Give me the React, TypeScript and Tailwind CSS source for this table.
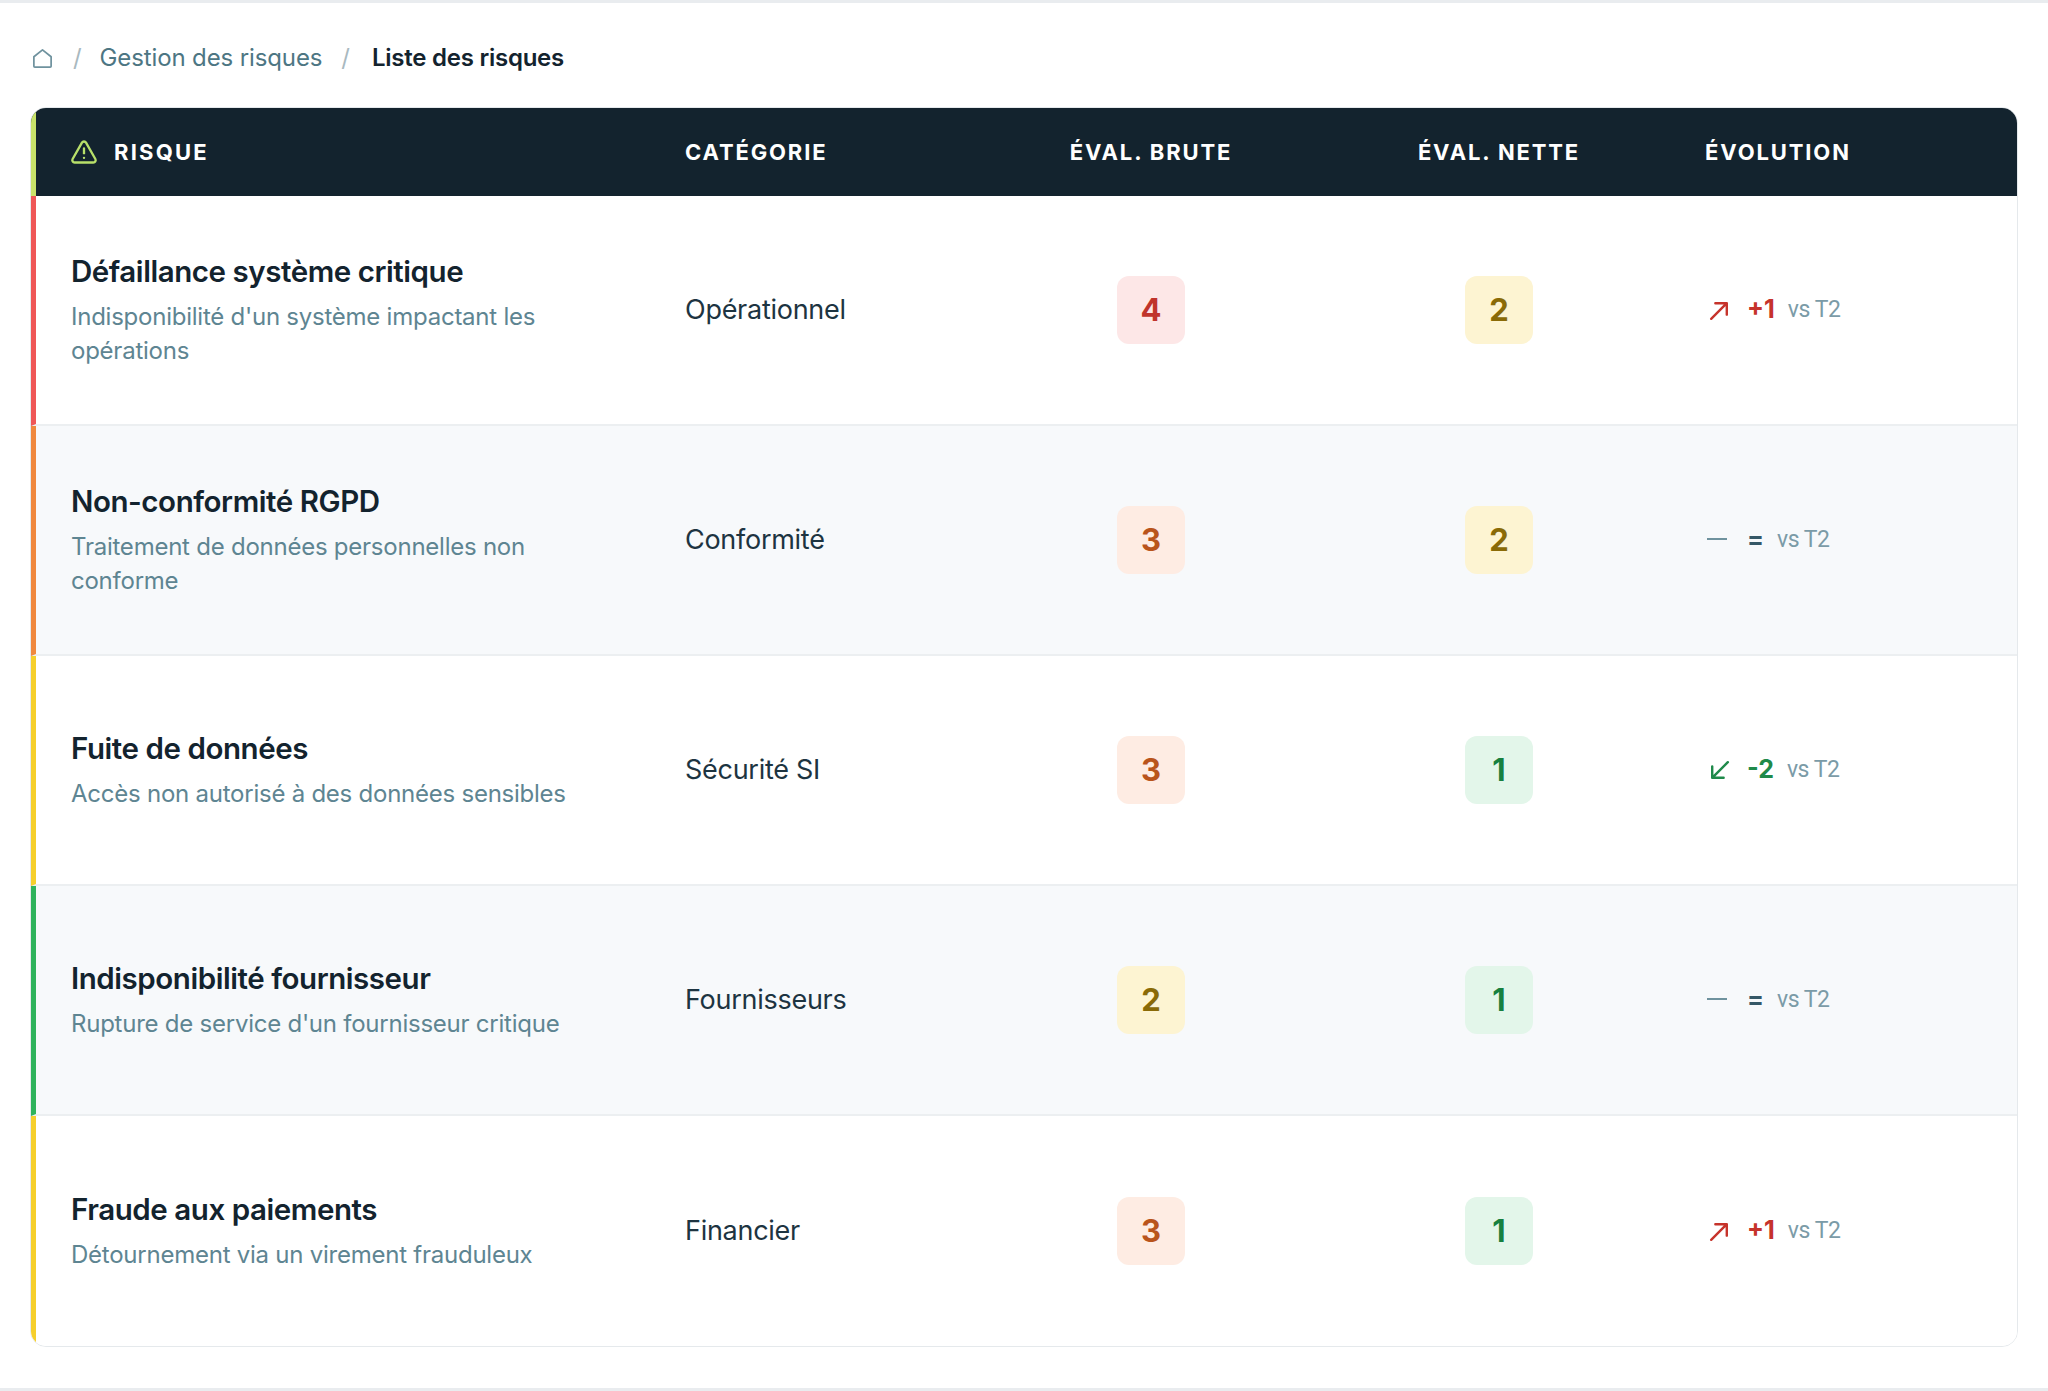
import React from "react";
import { TriangleAlert } from "lucide-react";

type Trend = "up" | "down" | "flat";
type Risk = {
  title: string;
  desc: string;
  cat: string;
  brute: number;
  nette: number;
  trend: Trend;
  delta: string;
  bar: string;
};

const risks: Risk[] = [
  { title: "Défaillance système critique", desc: "Indisponibilité d'un système impactant les opérations", cat: "Opérationnel", brute: 4, nette: 2, trend: "up", delta: "+1", bar: "border-l-[#ef5757]" },
  { title: "Non-conformité RGPD", desc: "Traitement de données personnelles non conforme", cat: "Conformité", brute: 3, nette: 2, trend: "flat", delta: "=", bar: "border-l-[#f0883e]" },
  { title: "Fuite de données", desc: "Accès non autorisé à des données sensibles", cat: "Sécurité SI", brute: 3, nette: 1, trend: "down", delta: "-2", bar: "border-l-[#f6cf2c]" },
  { title: "Indisponibilité fournisseur", desc: "Rupture de service d'un fournisseur critique", cat: "Fournisseurs", brute: 2, nette: 1, trend: "flat", delta: "=", bar: "border-l-[#2fb35c]" },
  { title: "Fraude aux paiements", desc: "Détournement via un virement frauduleux", cat: "Financier", brute: 3, nette: 1, trend: "up", delta: "+1", bar: "border-l-[#f6cf2c]" },
];

function Badge({ n }: { n: number }) {
  const cls =
    n === 4
      ? "bg-[#fde7e7] text-[#c0342c]"
      : n === 3
      ? "bg-[#feece3] text-[#b9541c]"
      : n === 2
      ? "bg-[#fdf4d2] text-[#8a6a06]"
      : "bg-[#e3f6ea] text-[#17803f]";
  return (
    <div className={`w-[68px] h-[68px] rounded-[12px] flex items-center justify-center text-[31px] font-bold ${cls}`}>
      {n}
    </div>
  );
}

function Arrow({ dir, color }: { dir: "up" | "down"; color: string }) {
  return (
    <svg width="25" height="25" viewBox="0 0 24 24" fill="none" stroke={color} strokeWidth="2.3" strokeLinecap="round" strokeLinejoin="round">
      {dir === "up" ? (
        <path d="M4 20 19 5M8 5h11v11" />
      ) : (
        <path d="M20 4 5 19M5 8v11h11" />
      )}
    </svg>
  );
}

function Evolution({ trend, delta }: { trend: Trend; delta: string }) {
  return (
    <div className="flex items-center">
      <div className="w-[26px] flex items-center justify-start">
        {trend === "up" && <Arrow dir="up" color="#c6332b" />}
        {trend === "down" && <Arrow dir="down" color="#1f8a4a" />}
        {trend === "flat" && <div className="w-[20px] h-[2px] bg-[#6f929e] mb-[2px]" />}
      </div>
      <span
        className={`ml-[14px] text-[25px] font-bold ${
          trend === "up" ? "text-[#c6332b]" : trend === "down" ? "text-[#1f8a4a]" : "text-[#355867]"
        }`}
      >
        {delta}
      </span>
      <span className="ml-[13px] text-[23px] text-[#7b9ba7] font-['Roboto',sans-serif] tracking-[-0.02em]">vs T2</span>
    </div>
  );
}

export default function App() {
  return (
    <div className="min-h-[1391px] w-[2048px] bg-white font-['Inter',sans-serif] border-t-[3px] border-t-[#e9ecef] border-b-[3px] border-b-[#e9ecef] box-border">
      <div className="px-[30px] pt-[38px]">
        {/* Breadcrumb */}
        <nav className="flex items-center h-[34px] text-[24px] tracking-[-0.005em]">
          <svg width="23" height="23" viewBox="0 0 24 24" fill="none" stroke="#6f929e" strokeWidth="1.8" strokeLinejoin="round" className="ml-[1px]">
            <path d="M3 10.2 12 3l9 7.2V20a1 1 0 0 1-1 1H4a1 1 0 0 1-1-1Z" />
          </svg>
          <span className="ml-[19px] mr-[18px] text-[#a9b9bf]">/</span>
          <span className="text-[#4d7683]">Gestion des risques</span>
          <span className="ml-[19px] mr-[22px] text-[#a9b9bf]">/</span>
          <span className="text-[#13232e] font-semibold tracking-[-0.01em]">Liste des risques</span>
        </nav>

        {/* Table card */}
        <div className="mt-[32px] rounded-[16px] border border-[#e5e9ec] overflow-hidden bg-white">
          <div className="grid grid-cols-[613px_324px_356px_340px_1fr] h-[88px] items-center bg-[#13232e] border-l-[5px] border-l-[#c9e36a] text-white text-[22px] font-bold tracking-[0.085em] uppercase">
            <div className="pl-[34px] flex items-center gap-[16px]">
              <TriangleAlert size={28} strokeWidth={2} className="text-[#b8e06a]" />
              <span className="tracking-[0.1em]">Risque</span>
            </div>
            <div className="pl-[36px]">Catégorie</div>
            <div className="flex justify-center">Éval. brute</div>
            <div className="flex justify-center">Éval. nette</div>
            <div className="pl-[36px]">Évolution</div>
          </div>

          {risks.map((r, i) => (
            <div
              key={r.title}
              className={`grid grid-cols-[613px_324px_356px_340px_1fr] h-[230px] items-center border-l-[5px] ${r.bar} ${
                i % 2 === 1 ? "bg-[#f7f9fb]" : "bg-white"
              } ${i < risks.length - 1 ? "border-b-2 border-b-[#eceff1]" : ""}`}
            >
              <div className="pl-[35px] pr-[24px]">
                <div className="text-[29.5px] font-semibold text-[#13232e] tracking-[-0.015em] leading-[38px]">{r.title}</div>
                <div className="mt-[10px] text-[24px] text-[#5e8592] leading-[34px] tracking-[-0.01em] max-w-[530px]">{r.desc}</div>
              </div>
              <div className="pl-[36px] text-[27px] text-[#1d3441] tracking-[-0.01em]">{r.cat}</div>
              <div className="flex justify-center">
                <Badge n={r.brute} />
              </div>
              <div className="flex justify-center">
                <Badge n={r.nette} />
              </div>
              <div className="pl-[38px]">
                <Evolution trend={r.trend} delta={r.delta} />
              </div>
            </div>
          ))}
        </div>
      </div>
    </div>
  );
}
